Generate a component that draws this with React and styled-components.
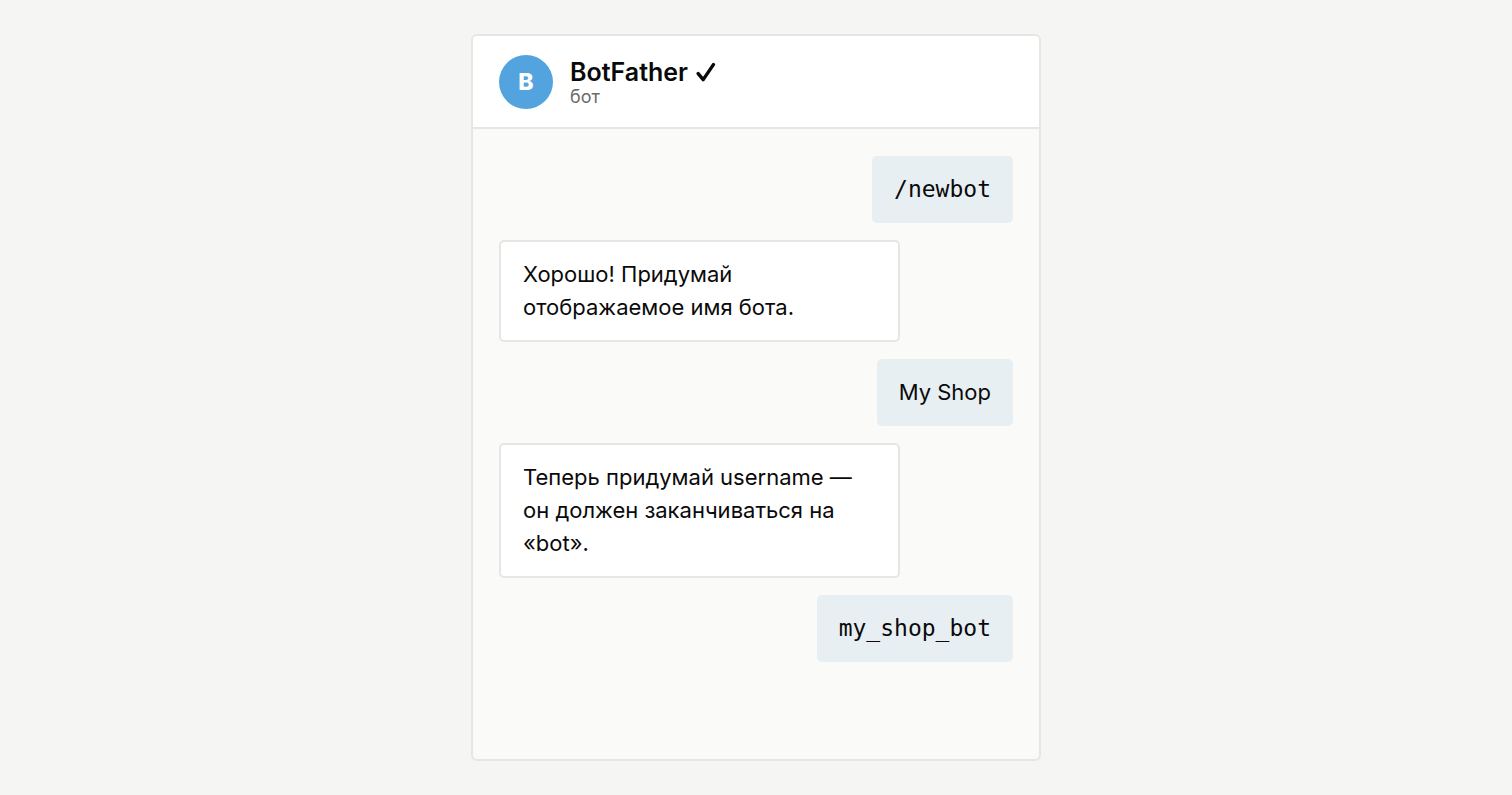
import React from 'react';
import styled, { createGlobalStyle } from 'styled-components';

const GlobalStyle = createGlobalStyle`
  * {
    box-sizing: border-box;
  }

  body {
    margin: 0;
    background: #f5f5f3;
    color: #0a0a0a;
    font-family: Inter, 'Liberation Sans', sans-serif;
  }
`;

const Page = styled.main`
  display: flex;
  justify-content: center;
  min-height: 100vh;
  padding: 34px 24px;
`;

const ChatCard = styled.section`
  display: flex;
  flex-direction: column;
  width: 100%;
  max-width: 570px;
  overflow: hidden;
  background: #fafaf8;
  border: 2px solid #e6e6e2;
  border-radius: 6px;
`;

const Header = styled.header`
  display: flex;
  align-items: center;
  gap: 17px;
  padding: 19px 26px 18px;
  background: #fff;
  border-bottom: 2px solid #e6e6e2;
`;

const Avatar = styled.div`
  display: flex;
  align-items: center;
  justify-content: center;
  width: 54px;
  height: 54px;
  border-radius: 50%;
  background: #52a3de;
  color: #fff;
  font-size: 23px;
  font-weight: 800;
`;

const Name = styled.h1`
  display: flex;
  align-items: center;
  gap: 8px;
  margin: 0;
  font-size: 25px;
  font-weight: 600;
  line-height: 30px;
`;

const Status = styled.p`
  margin: 0;
  color: #6b6b6b;
  font-size: 18px;
  line-height: 20px;
`;

const Messages = styled.div`
  display: flex;
  flex: 1;
  flex-direction: column;
  gap: 17px;
  padding: 27px 26px;
`;

const Bubble = styled.p`
  align-self: ${({ $own }) => ($own ? 'flex-end' : 'flex-start')};
  max-width: 78%;
  margin: 0;
  padding: ${({ $own }) => ($own ? '17px 22px' : '16px 22px')};
  background: ${({ $own }) => ($own ? '#e8eff3' : '#fff')};
  border: ${({ $own }) => ($own ? 'none' : '2px solid #e6e6e2')};
  border-radius: 5px;
  font-family: ${({ $mono }) => ($mono ? "'DejaVu Sans Mono', monospace" : 'inherit')};
  font-size: ${({ $mono }) => ($mono ? '23px' : '22px')};
  line-height: 33px;
`;

const messages = [
  { text: '/newbot', own: true, mono: true },
  { text: 'Хорошо! Придумай отображаемое имя бота.' },
  { text: 'My Shop', own: true },
  { text: 'Теперь придумай username — он должен заканчиваться на «bot».' },
  { text: 'my_shop_bot', own: true, mono: true },
];

const CheckIcon = () => (
  <svg width="20" height="20" viewBox="0 0 20 20" fill="none" aria-hidden="true">
    <path d="M2.2 11.6L7.2 17.6L17.4 2.6" stroke="currentColor" strokeWidth="3.4" strokeLinecap="round" strokeLinejoin="round" />
  </svg>
);

const App = () => {
  return (
    <>
      <GlobalStyle />
      <Page>
        <ChatCard>
          <Header>
            <Avatar>B</Avatar>
            <div>
              <Name>
                BotFather
                <CheckIcon />
              </Name>
              <Status>бот</Status>
            </div>
          </Header>
          <Messages>
            {messages.map((message) => (
              <Bubble key={message.text} $own={message.own} $mono={message.mono}>
                {message.text}
              </Bubble>
            ))}
          </Messages>
        </ChatCard>
      </Page>
    </>
  );
};

export default App;
